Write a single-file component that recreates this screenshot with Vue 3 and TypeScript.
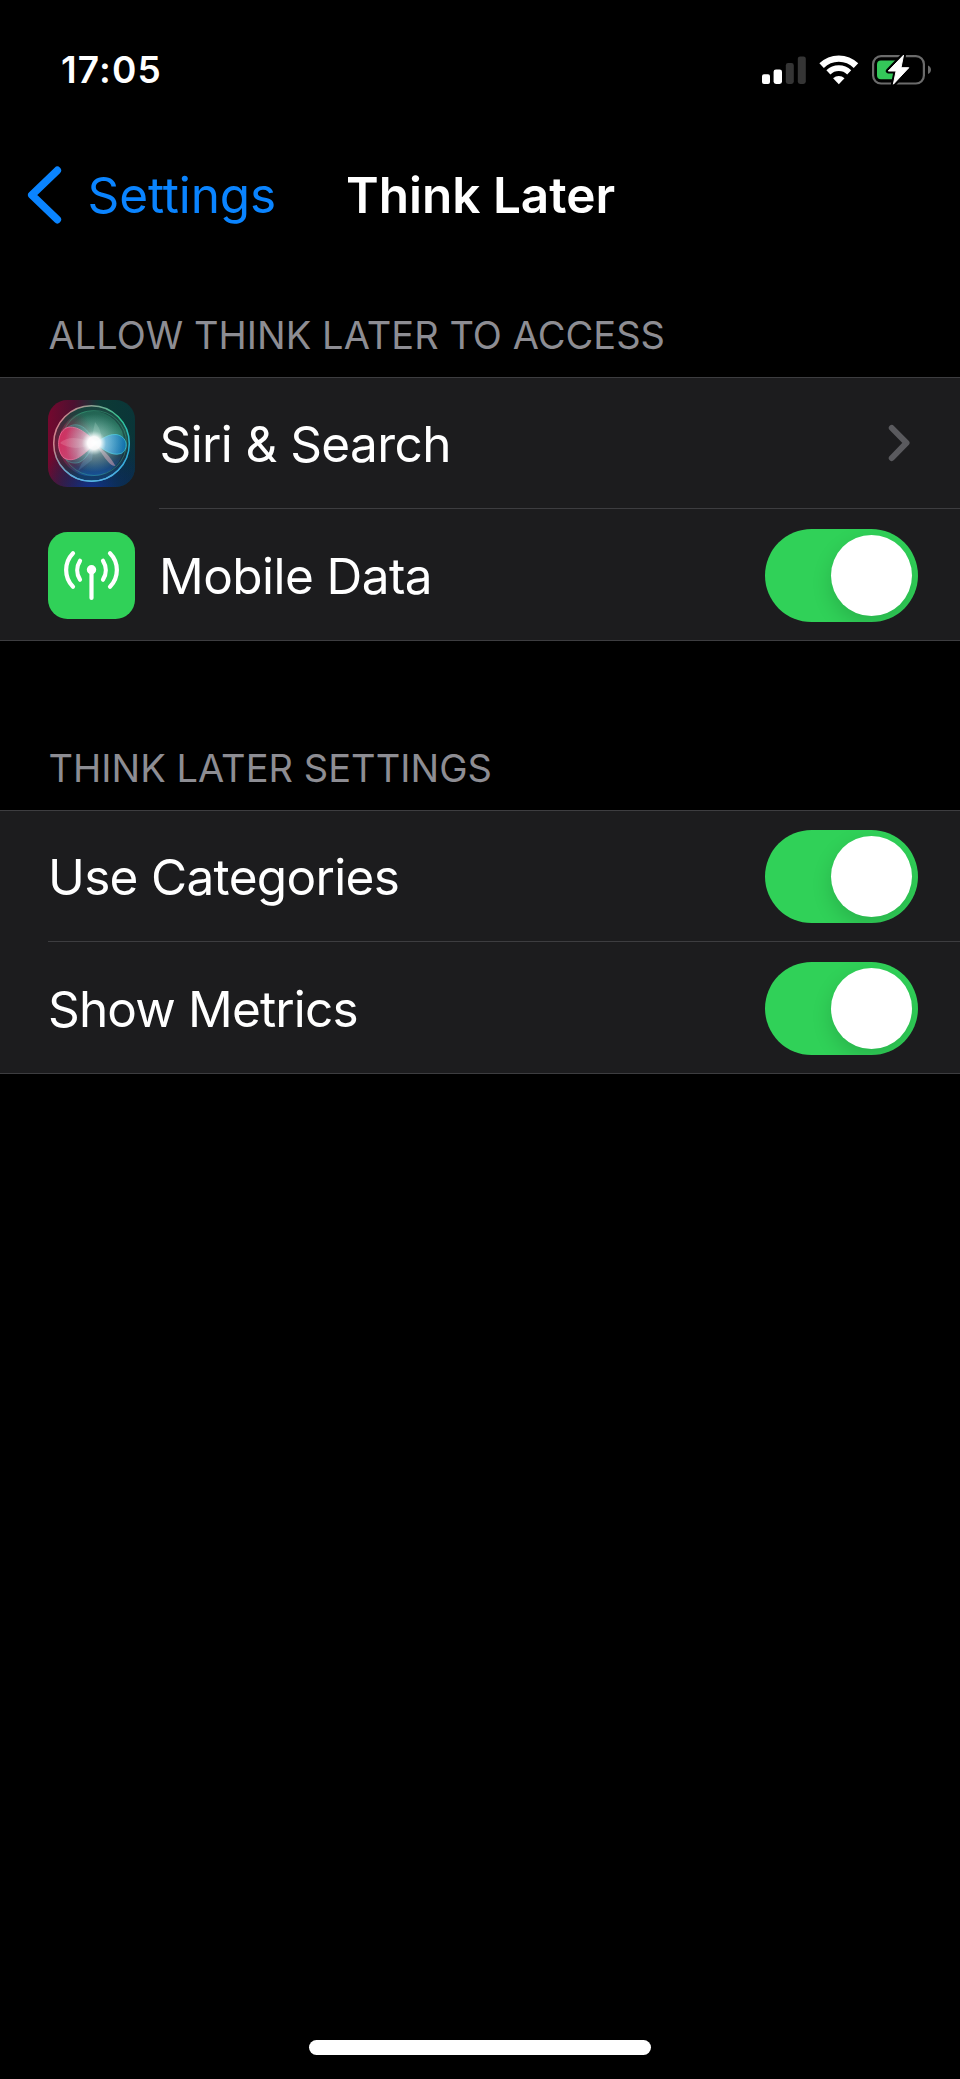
<script setup lang="ts">
interface Row {
  label: string
  tone: string
  icon?: 'siri' | 'antenna'
  control: 'link' | 'toggle'
}

interface Section {
  title: string
  rows: Row[]
}

const sections: Section[] = [
  {
    title: 'ALLOW THINK LATER TO ACCESS',
    rows: [
      { label: 'Siri & Search', tone: 'siri', icon: 'siri', control: 'link' },
      { label: 'Mobile Data', tone: 'mobile', icon: 'antenna', control: 'toggle' },
    ],
  },
  {
    title: 'THINK LATER SETTINGS',
    rows: [
      { label: 'Use Categories', tone: 'categories', control: 'toggle' },
      { label: 'Show Metrics', tone: 'metrics', control: 'toggle' },
    ],
  },
]
</script>

<template>
  <main class="screen">
    <header class="status">
      <span class="time">17:05</span>
      <div class="indicators">
        <svg class="signal" width="44" height="30" viewBox="0 0 44 30">
          <rect x="0" y="19.3" width="8" height="9.7" rx="2" fill="#fff" />
          <rect x="11.6" y="14.4" width="8.4" height="14.6" rx="2.4" fill="#fff" />
          <rect x="23.8" y="8" width="8" height="21" rx="2.4" fill="#353535" />
          <rect x="35.8" y="1.4" width="8" height="27.6" rx="2.4" fill="#353535" />
        </svg>
        <svg class="wifi" width="40" height="30" viewBox="0 0 40 30">
          <g fill="none" stroke="#fff">
            <path d="M2.6 10.6a24.6 24.6 0 0 1 34.4 0" stroke-width="6.4" />
            <path d="M9.4 17.4a15 15 0 0 1 20.8 0" stroke-width="5.8" />
          </g>
          <path d="M19.8 29.2l-5.7-5.9a8.4 8.4 0 0 1 11.4 0z" fill="#fff" />
        </svg>
        <svg class="battery" width="60" height="32" viewBox="0 0 60 32">
          <rect x="1.1" y="2.1" width="50.8" height="27.4" rx="8" fill="none" stroke="#6b6b6b" stroke-width="2.2" />
          <path d="M56 11.4c4 1.8 4 6.8 0 8.6z" fill="#6b6b6b" />
          <path d="M9 6.5H28V25.3H9a4 4 0 0 1-4-4v-10.8a4 4 0 0 1 4-4z" fill="#34c759" />
          <path d="M31.5 1.2L16.3 17h7.800L21.4 30.2 36.8 13.7H29z" fill="#000" stroke="#000" stroke-width="5" stroke-linejoin="round" />
          <path d="M31.5 1.2L16.3 17h7.8L21.4 30.2 36.8 13.7H29z" fill="#fff" stroke="#fff" stroke-linejoin="round" />
        </svg>
      </div>
    </header>

    <nav class="bar">
      <svg class="back-icon" width="36" height="60" viewBox="0 0 36 60">
        <path d="M31.3 5.4L5.8 30 31.3 54.6" fill="none" stroke="#0a84ff" stroke-width="7.6" stroke-linecap="round" stroke-linejoin="round" />
      </svg>
      <span class="back">Settings</span>
      <h1 class="title">Think Later</h1>
    </nav>

    <section v-for="s in sections" :key="s.title" class="section">
      <h2 class="heading">{{ s.title }}</h2>
      <div class="group">
        <div v-for="r in s.rows" :key="r.label" class="row">
          <svg v-if="r.icon === 'siri'" class="icon" width="87" height="87" viewBox="0 0 87 87">
            <defs>
              <linearGradient id="bgBase" x1="0" y1="0" x2="1" y2="0">
                <stop offset="0" stop-color="#74082e" />
                <stop offset=".3" stop-color="#4c1030" />
                <stop offset=".6" stop-color="#0c3a35" />
                <stop offset="1" stop-color="#0a3538" />
              </linearGradient>
              <radialGradient id="bgBlue" cx=".5" cy="1.05" r=".6">
                <stop offset="0" stop-color="#12309a" stop-opacity=".95" />
                <stop offset=".6" stop-color="#0c2c60" stop-opacity=".5" />
                <stop offset="1" stop-color="#0c2c58" stop-opacity="0" />
              </radialGradient>
              <radialGradient id="bgNavy" cx="1" cy="1" r=".6">
                <stop offset="0" stop-color="#0b2b4c" />
                <stop offset="1" stop-color="#0b2b4c" stop-opacity="0" />
              </radialGradient>
              <linearGradient id="orbRing" x1="0" y1=".2" x2="1" y2=".6">
                <stop offset="0" stop-color="#e07b8b" />
                <stop offset=".42" stop-color="#7fa593" />
                <stop offset=".75" stop-color="#2fc791" />
                <stop offset="1" stop-color="#2bafd6" />
              </linearGradient>
              <linearGradient id="ringLow" x1="0" y1="0" x2="0" y2="1">
                <stop offset=".6" stop-color="#4a9fe0" stop-opacity="0" />
                <stop offset="1" stop-color="#5aaaf0" />
              </linearGradient>
              <linearGradient id="orbFill" x1=".4" y1="0" x2=".5" y2="1">
                <stop offset="0" stop-color="#1f5c4c" />
                <stop offset=".4" stop-color="#2f7d69" />
                <stop offset=".7" stop-color="#234257" />
                <stop offset="1" stop-color="#1255ac" />
              </linearGradient>
              <radialGradient id="redSide" cx="0" cy=".5" r=".55">
                <stop offset="0" stop-color="#c01549" />
                <stop offset=".5" stop-color="#8a1a40" stop-opacity=".7" />
                <stop offset="1" stop-color="#6c1737" stop-opacity="0" />
              </radialGradient>
              <radialGradient id="glow" cx="46" cy="43" r="29" gradientUnits="userSpaceOnUse">
                <stop offset="0" stop-color="#fff" />
                <stop offset=".22" stop-color="#fff" stop-opacity=".95" />
                <stop offset=".42" stop-color="#d9f4f0" stop-opacity=".42" />
                <stop offset="1" stop-color="#9fe0d5" stop-opacity="0" />
              </radialGradient>
              <linearGradient id="pinkLobe" x1="0" y1="0" x2="1" y2=".2">
                <stop offset="0" stop-color="#e01f55" />
                <stop offset=".6" stop-color="#d75583" />
                <stop offset="1" stop-color="#f6c0d6" />
              </linearGradient>
              <linearGradient id="blueLobe" x1="0" y1="0" x2="1" y2="0">
                <stop offset="0" stop-color="#c0f0fa" />
                <stop offset=".4" stop-color="#3a9fe0" />
                <stop offset="1" stop-color="#1277b8" />
              </linearGradient>
            </defs>
            <rect width="87" height="87" rx="19.5" fill="url(#bgBase)" />
            <rect width="87" height="87" rx="19.5" fill="url(#bgNavy)" />
            <rect width="87" height="87" rx="19.5" fill="url(#bgBlue)" />
            <circle cx="43.5" cy="43.5" r="38" fill="url(#orbFill)" />
            <circle cx="43.5" cy="43.5" r="38" fill="url(#redSide)" />
            <circle cx="43.5" cy="43.5" r="35" fill="none" stroke="#10242a" stroke-opacity=".45" stroke-width="4.5" />
            <circle cx="46" cy="43" r="32.5" fill="none" stroke="#47c795" stroke-opacity=".35" />
            <circle cx="43.5" cy="43.5" r="37.8" fill="none" stroke="url(#orbRing)" stroke-width="1.5" />
            <circle cx="43.5" cy="43.5" r="37.8" fill="none" stroke="url(#ringLow)" stroke-width="1.5" />
            <path d="M46 43C38 20 20 20 13 36 8 54 20 67 32 62 39 58 43 50 46 43z" fill="#2ca6a8" fill-opacity=".25" stroke="#53c3c1" stroke-opacity=".4" />
            <path d="M49 43C40 35 29 24 18 28 9 33 8 51 16 58 29 65 39 49 49 43z" fill="url(#pinkLobe)" fill-opacity=".85" stroke="#ef6f9a" stroke-width=".8" />
            <path d="M12 43C20 35 34 38 46 43 34 50 20 49 12 43z" fill="#f5afc5" fill-opacity=".25" />
            <path d="M44 42C53 42 57 34 68 34.500 80 36 81 50 73 53.500 62 57 54 47 44 42z" fill="url(#blueLobe)" fill-opacity=".85" stroke="#38c5dc" stroke-width=".8" />
            <path d="M46 43C56 50 62 56 67.5 66 60 66 54 52 46 43z" fill="#eda5ba" fill-opacity=".5" />
            <path d="M46 43C40 52 35 60 30 71L44 60z" fill="#67a9de" fill-opacity=".22" />
            <path d="M44 43C44 34 46 28 47 22 53 29 54 36 53 43z" fill="#c9f0dd" fill-opacity=".2" />
            <circle cx="46" cy="43" r="29" fill="url(#glow)" />
          </svg>
          <svg v-else-if="r.icon === 'antenna'" class="icon" width="87" height="87" viewBox="0 0 87 87">
            <rect width="87" height="87" rx="19.5" fill="#30d158" />
            <g fill="none" stroke="#fff" stroke-width="4.2" stroke-linecap="round">
              <path d="M43.5 38V66" />
              <path d="M32 28.8A17.5 17.5 0 0 0 32 47.7M55 28.8A17.5 17.5 0 0 1 55 47.7" />
              <path d="M25 21.2A24 24 0 0 0 25 54.8M62 21.2A24 24 0 0 1 62 54.8" />
            </g>
            <circle cx="43.5" cy="37.7" r="4.7" fill="#fff" />
          </svg>
          <div class="content">
            <span class="label" :class="r.tone">{{ r.label }}</span>
            <svg v-if="r.control === 'link'" class="chevron" width="24" height="40" viewBox="0 0 24 40">
              <path d="M4.8 5L19.5 19.9 4.8 35" fill="none" stroke="#5a5a5e" stroke-width="6" stroke-linecap="round" stroke-linejoin="round" />
            </svg>
            <span v-else class="toggle"><span class="knob"></span></span>
          </div>
        </div>
      </div>
    </section>

    <div class="home"></div>
  </main>
</template>

<style>
html,
body {
  background: #000;
}
</style>

<style scoped>
.screen {
  display: flex;
  flex-direction: column;
  box-sizing: border-box;
  width: 960px;
  height: 2079px;
  overflow: hidden;
  background: #000;
  color: #fff;
  font-family: Inter, "Liberation Sans", sans-serif;
}
.status {
  display: flex;
  justify-content: space-between;
  height: 140px;
  flex: none;
  box-sizing: border-box;
  padding: 48px 28px 0 61px;
}
.time {
  font-size: 37px;
  line-height: 44px;
  font-weight: 600;
  letter-spacing: 1.15px;
}
.indicators {
  display: flex;
  align-items: flex-start;
  padding-top: 7px;
}
.wifi {
  margin-left: 13px;
}
.battery {
  margin: -1px 0 0 13px;
}
.bar {
  display: flex;
  align-items: center;
  flex: none;
  height: 110px;
  padding-left: 26px;
}
.back-icon {
  flex: none;
}
.back {
  width: 258.5px;
  margin-left: 25.5px;
  color: #0a84ff;
  font-size: 49.5px;
  line-height: 60px;
  letter-spacing: -0.12px;
}
.title {
  margin: 0;
  font-size: 49.5px;
  line-height: 60px;
  font-weight: 600;
}
.section {
  flex: none;
  margin-bottom: 42px;
}
.heading {
  box-sizing: border-box;
  height: 127px;
  margin: 0;
  padding: 61px 0 0 48.4px;
  color: #8d8d93;
  font-size: 38px;
  line-height: 48px;
  font-weight: 400;
  letter-spacing: 0.05px;
  white-space: nowrap;
}
.group {
  border-top: 1px solid #3d3d40;
  border-bottom: 1px solid #3d3d40;
  background: #1c1c1e;
}
.row {
  display: flex;
  height: 131px;
  padding-left: 48px;
}
.icon {
  flex: none;
  margin: 22px 24px 0 0;
}
.content {
  display: flex;
  flex: 1;
  justify-content: space-between;
  box-sizing: border-box;
  padding-right: 42px;
}
.row:not(:last-child) .content {
  border-bottom: 1px solid #3d3d40;
}
.row:last-child .icon {
  margin-top: 23px;
}
.label {
  padding-top: 36px;
  font-size: 49.5px;
  line-height: 60px;
}
.row:last-child .label {
  padding-top: 37px;
}
.label.siri {
  padding-left: 0.5px;
  letter-spacing: -0.6px;
}
.label.mobile {
  letter-spacing: -0.56px;
}
.label.categories {
  letter-spacing: -0.68px;
}
.label.metrics {
  letter-spacing: -0.84px;
}
.chevron {
  margin: 45px 7px 0 0;
}
.toggle {
  box-sizing: border-box;
  width: 153px;
  height: 93px;
  margin-top: 20px;
  padding: 6px 6px 6px 66px;
  border-radius: 47px;
  background: #30d158;
  overflow: hidden;
}
.row:not(:last-child) .toggle {
  margin-top: 19px;
}
.knob {
  display: block;
  width: 81px;
  height: 81px;
  border-radius: 50%;
  background: #fff;
  box-shadow: 0 8px 20px rgba(0, 0, 0, 0.15);
}
.home {
  flex: none;
  width: 342px;
  height: 15px;
  margin: auto auto 24px;
  border-radius: 8px;
  background: #fff;
}
</style>
